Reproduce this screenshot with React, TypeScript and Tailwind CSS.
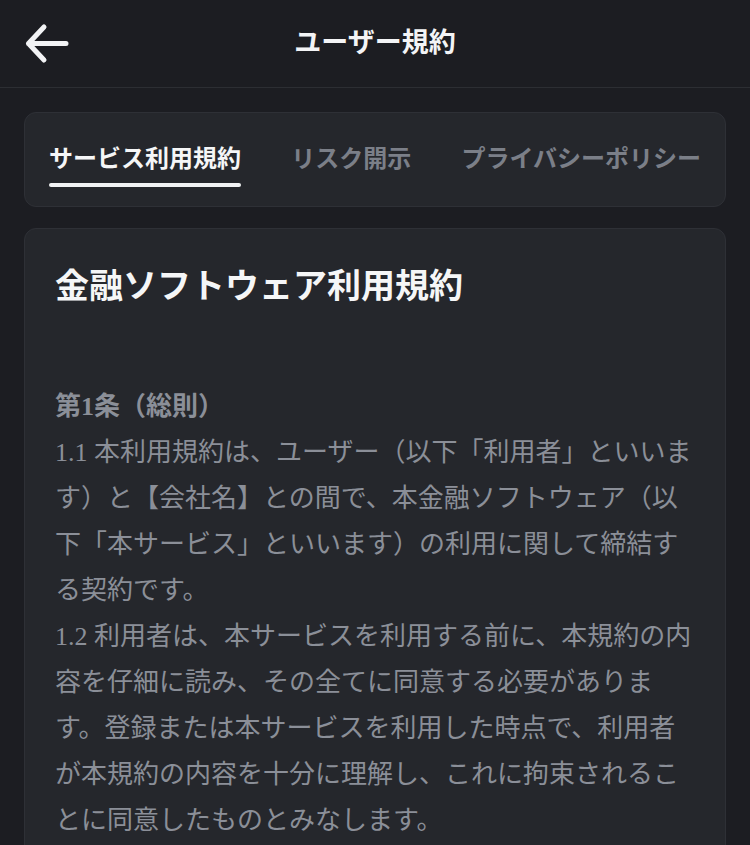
const FONT = 'font-["Liberation_Serif","Noto_Sans_CJK_JP",serif]'

const tabs = ['サービス利用規約', 'リスク開示', 'プライバシーポリシー']

function BackArrow() {
  return (
    <svg width="48" height="44" viewBox="0 0 48 44" fill="none" aria-hidden>
      <path
        d="M19 5 L3.5 21.5 L19 38 M3.5 21.5 H41"
        stroke="#f2f3f5"
        strokeWidth="5"
        strokeLinecap="round"
        strokeLinejoin="round"
      />
    </svg>
  )
}

export default function App() {
  const active = 0

  return (
    <div className={`min-h-screen bg-[#1c1d22] ${FONT}`}>
      {/* Header */}
      <header className="grid h-[88px] grid-cols-[96px_1fr_96px] items-center border-b border-[#2c2e33]">
        <button className="flex items-center pl-[25px] pt-[1px]">
          <BackArrow />
        </button>
        <h1 className="pb-[2px] text-center text-[27px] leading-[36px] font-bold text-[#f3f4f6]">ユーザー規約</h1>
        <span />
      </header>

      <main className="flex flex-col gap-[21px] px-[24px] pt-[24px]">
        {/* Tabs */}
        <nav className="flex items-start justify-between rounded-[12px] border border-[#2e3036] bg-[#25272c] px-[24px] pt-[30px] pb-[19px]">
          {tabs.map((t, i) => (
            <div key={t} className="flex flex-col">
              <span
                className={`text-[24px] leading-[32px] font-bold ${
                  i === active ? 'text-[#f5f6f7]' : 'text-[#7b7f88]'
                }`}
              >
                {t}
              </span>
              {i === active && <span className="mt-[8px] h-[4px] rounded-full bg-[#f1f2f4]" />}
            </div>
          ))}
        </nav>

        {/* Content */}
        <article className="rounded-t-[12px] border border-[#2e3036] bg-[#25272c] px-[30px] pt-[32px] pb-[40px]">
          <h2 className="text-[34px] leading-[51px] font-bold text-[#f5f6f7]">金融ソフトウェア利用規約</h2>
          <div className="mt-[72px] text-[26px] leading-[46px] text-[#8b8f98]">
            <p className="font-bold">第1条（総則）</p>
            <p>
              1.1 本利用規約は、ユーザー（以下「利用者」といいます）と【会社名】との間で、本金融ソフトウェア（以下「本サービス」といいます）の利用に関して締結する契約です。
            </p>
            <p>
              1.2 利用者は、本サービスを利用する前に、本規約の内容を仔細に読み、その全てに同意する必要があります。登録または本サービスを利用した時点で、利用者が本規約の内容を十分に理解し、これに拘束されることに同意したものとみなします。
            </p>
          </div>
        </article>
      </main>
    </div>
  )
}
